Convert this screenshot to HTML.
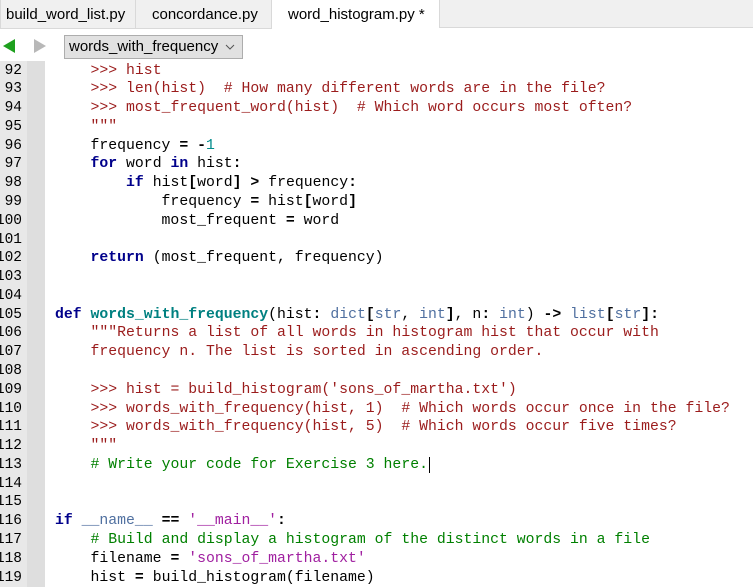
<!DOCTYPE html>
<html><head><meta charset="utf-8"><style>
*{margin:0;padding:0;box-sizing:border-box}
body{width:753px;height:587px;overflow:hidden;background:#fff;position:relative;font-family:"Liberation Sans",sans-serif}
.tabbar{position:absolute;left:0;top:0;width:753px;height:29px;background:#fff}
.tab{position:absolute;top:0;height:29px;font-size:15px;line-height:29px;color:#000;padding-left:5px}
.t1{left:0;width:136px;background:#f0f0f0;border:1px solid #d9d9d9;border-top:none}
.t2{left:136px;width:136px;background:#f0f0f0;border-bottom:1px solid #d9d9d9;border-right:1px solid #d9d9d9;padding-left:16px}
.t3{left:272px;width:167px;background:#fff;padding-left:16px}
.t4{left:439px;width:314px;background:#f0f0f0;border-left:1px solid #d9d9d9;border-bottom:1px solid #d9d9d9;height:28px}
.dd{position:absolute;left:64px;top:35px;width:179px;height:24px;background:#e1e1e1;border:1px solid #adadad;font-size:15px;line-height:22px;padding-left:4px}
.gut{position:absolute;left:0;top:61px;width:27px;height:526px;background:#e8e8e8}
.gut2{position:absolute;left:27px;top:61px;width:18px;height:526px;background:#dedede}
.ln{position:absolute;right:731px;font:14.5px/18.78px "Liberation Mono",monospace;color:#000;white-space:pre}
.cl{position:absolute;left:55px;font:14.8px/18.78px "Liberation Mono",monospace;color:#000;white-space:pre}
.k{color:#00008b;font-weight:bold}
.f{color:#008080;font-weight:bold}
.d{color:#9b1c1c}
.c{color:#008000}
.n{color:#008b8b}
.b{color:#5070a0}
.s{color:#a020a0}
.o{font-weight:bold}
</style></head><body>
<div class="tabbar">
<div class="tab t1">build_word_list.py</div>
<div class="tab t2">concordance.py</div>
<div class="tab t3">word_histogram.py *</div>
<div class="tab t4"></div>
</div>
<svg style="position:absolute;left:0;top:36px" width="50" height="22"><polygon points="3,10 15,3 15,17" fill="#1ea01e"/><polygon points="34,3 46,10 34,17" fill="#b8b8b8"/></svg>
<div class="dd">words_with_frequency<svg style="position:absolute;left:160px;top:8px" width="10" height="7"><polyline points="1,1 5,5 9,1" fill="none" stroke="#555" stroke-width="1"/></svg></div>
<div class="gut"></div><div class="gut2"></div>
<div id="c"></div>
<script>
var L=[
'    <span class="d">&gt;&gt;&gt; hist</span>',
'    <span class="d">&gt;&gt;&gt; len(hist)  # How many different words are in the file?</span>',
'    <span class="d">&gt;&gt;&gt; most_frequent_word(hist)  # Which word occurs most often?</span>',
'    <span class="d">"""</span>',
'    frequency <span class="o">=</span> <span class="o">-</span><span class="n">1</span>',
'    <span class="k">for</span> word <span class="k">in</span> hist<span class="o">:</span>',
'        <span class="k">if</span> hist<span class="o">[</span>word<span class="o">]</span> <span class="o">&gt;</span> frequency<span class="o">:</span>',
'            frequency <span class="o">=</span> hist<span class="o">[</span>word<span class="o">]</span>',
'            most_frequent <span class="o">=</span> word',
'',
'    <span class="k">return</span> (most_frequent, frequency)',
'',
'',
'<span class="k">def</span> <span class="f">words_with_frequency</span>(hist<span class="o">:</span> <span class="b">dict</span><span class="o">[</span><span class="b">str</span>, <span class="b">int</span><span class="o">]</span>, n<span class="o">:</span> <span class="b">int</span>) <span class="o">-&gt;</span> <span class="b">list</span><span class="o">[</span><span class="b">str</span><span class="o">]:</span>',
'    <span class="d">"""Returns a list of all words in histogram hist that occur with</span>',
'<span class="d">    frequency n. The list is sorted in ascending order.</span>',
'',
'    <span class="d">&gt;&gt;&gt; hist = build_histogram(\'sons_of_martha.txt\')</span>',
'    <span class="d">&gt;&gt;&gt; words_with_frequency(hist, 1)  # Which words occur once in the file?</span>',
'    <span class="d">&gt;&gt;&gt; words_with_frequency(hist, 5)  # Which words occur five times?</span>',
'    <span class="d">"""</span>',
'    <span class="c"># Write your code for Exercise 3 here.</span><span style="border-left:1px solid #000;margin-left:1px"></span>',
'',
'',
'<span class="k">if</span> <span class="b">__name__</span> <span class="o">==</span> <span class="s">\'__main__\'</span><span class="o">:</span>',
'    <span class="c"># Build and display a histogram of the distinct words in a file</span>',
'    filename <span class="o">=</span> <span class="s">\'sons_of_martha.txt\'</span>',
'    hist <span class="o">=</span> build_histogram(filename)'
];
var h='';
for(var i=0;i<L.length;i++){var t=61.5+i*18.78;
h+='<div class="ln" style="top:'+t+'px">'+(92+i)+'</div><div class="cl" style="top:'+t+'px">'+L[i]+'</div>';}
document.getElementById('c').innerHTML=h;
</script>
</body></html>
